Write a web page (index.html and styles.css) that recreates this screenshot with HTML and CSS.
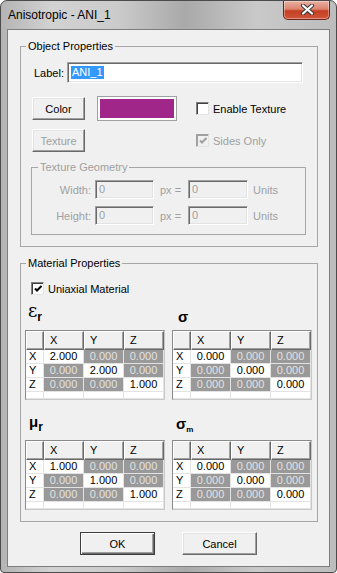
FILE: index.html
```html
<!DOCTYPE html>
<html lang="en">
<head>
    <meta charset="UTF-8">
    <title>Anisotropic - ANI_1</title>
    <link rel="stylesheet" href="styles.css">
</head>
<body>
<div class="window">
    <div class="titlebar">
        <span class="title">Anisotropic - ANI_1</span>
        <button class="close" type="button">
            <svg width="15" height="11" viewBox="0 0 15 11">
                <path d="M3 1.5 L12 9.5 M12 1.5 L3 9.5" stroke="#3b3b3b" stroke-width="4.2" stroke-linecap="round"/>
                <path d="M3 1.5 L12 9.5 M12 1.5 L3 9.5" stroke="#fff" stroke-width="2.2" stroke-linecap="round"/>
            </svg>
        </button>
    </div>
    <div class="client">
        <fieldset class="group obj">
            <legend>Object Properties</legend>
            <div class="label-row">
                <span class="lbl">Label:</span>
                <div class="textbox wide"><span class="sel">ANI_1</span></div>
            </div>
            <div class="obj-grid">
                <button class="btn" type="button">Color</button>
                <div class="swatch"><div class="fill"></div></div>
                <label class="checkline"><span class="check"></span>Enable Texture</label>
                <button class="btn" type="button" disabled>Texture</button>
                <div></div>
                <label class="checkline disabled">
                    <span class="check on">
                        <svg width="11" height="11" viewBox="0 0 11 11"><polyline points="2,4.5 4,6.5 8.5,2" fill="none" stroke="#a0a0a0" stroke-width="2"/></svg>
                    </span>Sides Only
                </label>
            </div>
            <fieldset class="group geom">
                <legend>Texture Geometry</legend>
                <div class="geom-grid">
                    <span class="glbl">Width:</span>
                    <div class="textbox off">0</div>
                    <span class="gpx">px =</span>
                    <div class="textbox off">0</div>
                    <span class="gunit">Units</span>
                    <span class="glbl">Height:</span>
                    <div class="textbox off">0</div>
                    <span class="gpx">px =</span>
                    <div class="textbox off">0</div>
                    <span class="gunit">Units</span>
                </div>
            </fieldset>
        </fieldset>

        <fieldset class="group mat">
            <legend>Material Properties</legend>
            <label class="checkline uni">
                <span class="check on">
                    <svg width="11" height="11" viewBox="0 0 11 11"><polyline points="2,4.5 4,6.5 8.5,2" fill="none" stroke="#000" stroke-width="2"/></svg>
                </span>Uniaxial Material
            </label>
            <div class="tensors">
                <div class="tensor">
                    <div class="sym eps"><span>ε<sub>r</sub></span></div>
                    <div class="matrix">
                        <div class="hd"></div><div class="hd">X</div><div class="hd">Y</div><div class="hd">Z</div>
                        <div class="rh">X</div><div class="v">2.000</div><div class="v off">0.000</div><div class="v off">0.000</div>
                        <div class="rh">Y</div><div class="v off">0.000</div><div class="v">2.000</div><div class="v off">0.000</div>
                        <div class="rh">Z</div><div class="v off">0.000</div><div class="v off">0.000</div><div class="v">1.000</div>
                        <div class="rh"></div><div class="v"></div><div class="v"></div><div class="v"></div>
                    </div>
                </div>
                <div class="tensor">
                    <div class="sym sig"><span>σ</span></div>
                    <div class="matrix">
                        <div class="hd"></div><div class="hd">X</div><div class="hd">Y</div><div class="hd">Z</div>
                        <div class="rh">X</div><div class="v">0.000</div><div class="v off">0.000</div><div class="v off">0.000</div>
                        <div class="rh">Y</div><div class="v off">0.000</div><div class="v">0.000</div><div class="v off">0.000</div>
                        <div class="rh">Z</div><div class="v off">0.000</div><div class="v off">0.000</div><div class="v">0.000</div>
                        <div class="rh"></div><div class="v"></div><div class="v"></div><div class="v"></div>
                    </div>
                </div>
                <div class="tensor">
                    <div class="sym mu"><span>μ<sub>r</sub></span></div>
                    <div class="matrix">
                        <div class="hd"></div><div class="hd">X</div><div class="hd">Y</div><div class="hd">Z</div>
                        <div class="rh">X</div><div class="v">1.000</div><div class="v off">0.000</div><div class="v off">0.000</div>
                        <div class="rh">Y</div><div class="v off">0.000</div><div class="v">1.000</div><div class="v off">0.000</div>
                        <div class="rh">Z</div><div class="v off">0.000</div><div class="v off">0.000</div><div class="v">1.000</div>
                        <div class="rh"></div><div class="v"></div><div class="v"></div><div class="v"></div>
                    </div>
                </div>
                <div class="tensor">
                    <div class="sym sigm"><span>σ<sub>m</sub></span></div>
                    <div class="matrix">
                        <div class="hd"></div><div class="hd">X</div><div class="hd">Y</div><div class="hd">Z</div>
                        <div class="rh">X</div><div class="v">0.000</div><div class="v off">0.000</div><div class="v off">0.000</div>
                        <div class="rh">Y</div><div class="v off">0.000</div><div class="v">0.000</div><div class="v off">0.000</div>
                        <div class="rh">Z</div><div class="v off">0.000</div><div class="v off">0.000</div><div class="v">0.000</div>
                        <div class="rh"></div><div class="v"></div><div class="v"></div><div class="v"></div>
                    </div>
                </div>
            </div>
        </fieldset>

        <div class="actions">
            <button class="btn big default" type="button">OK</button>
            <button class="btn big" type="button">Cancel</button>
        </div>
    </div>
</div>
</body>
</html>
```

FILE: styles.css
```css
* {
    box-sizing: border-box;
}
body {
    margin: 0;
    background: #fff;
    font: 11px "Liberation Sans", Arial, sans-serif;
    color: #000;
}

/* window frame */
.window {
    width: 337px;
    height: 573px;
    display: flex;
    flex-direction: column;
    border: 1px solid #4b4b4b;
    border-radius: 7px 7px 4px 4px;
    overflow: hidden;
    background: linear-gradient(90deg, #b4b4b4 0%, #d2d2d2 15%, #cbcbcb 35%, #a9a9a9 55%, #c9c9c9 76%, #bdbdbd 100%);
}
.titlebar {
    height: 28px;
    display: flex;
    align-items: flex-start;
    padding: 0 6px 0 7px;
}
.title {
    font-size: 12px;
    line-height: 28px;
}
.close {
    margin-left: auto;
    width: 47px;
    height: 19px;
    padding: 1px 0 0 2px;
    border: 1px solid #6b2719;
    border-top: none;
    border-radius: 0 0 5px 5px;
    background: linear-gradient(#eab0a2, #dc8470 45%, #c43e22 55%, #d1573b);
    box-shadow: inset 0 0 0 1px rgba(255, 255, 255, 0.35);
}

.client {
    flex: 1;
    margin: 0 6px 5px;
    border: 1px solid #7d7d7d;
    background: #f0f0f0;
    display: flex;
    flex-direction: column;
}

/* group boxes */
.group {
    margin: 0;
    padding: 0;
    min-width: 0;
    border: 1px solid #a6a6a6;
}
.group legend {
    margin-left: 5px;
    padding: 0 2px;
    line-height: 13px;
}
.obj {
    margin: 10px 11px 0 12px;
    padding-bottom: 11px;
}
.mat {
    margin: 10px 11px 0 12px;
    padding-bottom: 11px;
}

.label-row {
    display: flex;
    align-items: center;
    margin-top: 9px;
    padding-left: 13px;
}
.lbl {
    width: 33px;
}

/* sunken text boxes */
.textbox {
    height: 21px;
    padding: 3px 0 0 3px;
    line-height: 13px;
    background: #fff;
    border: 1px solid;
    border-color: #a0a0a0 #fff #fff #a0a0a0;
    box-shadow: inset 1px 1px 0 #696969, inset -1px -1px 0 #e3e3e3;
}
.textbox.wide {
    width: 236px;
}
.textbox.off {
    height: 19px;
    padding-top: 2px;
    background: #f0f0f0;
    color: #a0a0a0;
}
.sel {
    display: inline-block;
    padding: 0 1px;
    background: #3399ff;
    color: #fff;
}

/* buttons */
.btn {
    height: 23px;
    padding: 0;
    font: inherit;
    color: #000;
    background: #f0f0f0;
    border: 1px solid;
    border-color: #fff #696969 #696969 #fff;
    box-shadow: inset -1px -1px 0 #a0a0a0, inset 1px 1px 0 #e3e3e3;
}
.btn:disabled {
    color: #a0a0a0;
}
.btn.big {
    width: 75px;
}
.btn.default {
    border-color: #3c3c3c;
    box-shadow: inset 1px 1px 0 #fff, inset -1px -1px 0 #696969, inset -2px -2px 0 #a0a0a0;
}

.obj-grid {
    display: grid;
    grid-template-columns: 53px 80px 1fr;
    grid-template-rows: 25px 23px;
    column-gap: 12px;
    row-gap: 8px;
    align-items: center;
    margin-top: 13px;
    padding-left: 11px;
}
.swatch {
    height: 25px;
    padding: 2px;
    border: 1px solid #a0a0a0;
    background: #fff;
}
.swatch .fill {
    height: 100%;
    background: #a0268a;
}

/* check boxes */
.checkline {
    display: flex;
    align-items: center;
    gap: 4px;
}
.obj-grid .checkline {
    padding-left: 7px;
}
.checkline.disabled {
    color: #a0a0a0;
}
.check {
    width: 13px;
    height: 13px;
    flex: none;
    background: #fff;
    border: 1px solid;
    border-color: #808080 #e3e3e3 #e3e3e3 #808080;
    box-shadow: inset 1px 1px 0 #404040;
}
.check svg {
    display: block;
    margin: 1px 0 0 1px;
}
.checkline.disabled .check {
    background: #f0f0f0;
    border-color: #a0a0a0 #e3e3e3 #e3e3e3 #a0a0a0;
    box-shadow: inset 1px 1px 0 #a0a0a0;
}
.uni {
    margin: 12px 0 0 10px;
    height: 13px;
}

/* texture geometry */
.geom {
    margin: 9px 11px 0 10px;
    padding-bottom: 9px;
}
.geom legend {
    margin-left: 6px;
    color: #a0a0a0;
}
.geom-grid {
    display: grid;
    grid-template-columns: 63px 59px 34px 60px auto;
    grid-template-rows: 19px 19px;
    row-gap: 7px;
    align-items: center;
    margin-top: 6px;
    color: #a0a0a0;
}
.glbl {
    text-align: right;
    padding-right: 4px;
}
.gpx {
    padding-left: 6px;
}
.gunit {
    padding-left: 5px;
}

/* tensors */
.tensors {
    display: grid;
    grid-template-columns: 140px 140px;
    column-gap: 7px;
    row-gap: 5px;
    margin: 0 5px 0 4px;
}
.sym {
    height: 35px;
    display: flex;
    align-items: flex-end;
    padding-bottom: 6px;
    font-weight: bold;
    line-height: 1;
}
.sym sub {
    font: bold 12px "Liberation Sans", Arial, sans-serif;
    vertical-align: -4px;
}
.eps {
    padding-left: 3px;
    font: 18px "DejaVu Serif", serif;
}
.sig {
    padding-left: 6px;
    font-size: 15px;
}
.mu {
    padding-left: 4px;
    font-size: 15px;
}
.sigm {
    padding-left: 4px;
    font-size: 15px;
}
.sigm sub {
    font-size: 8px;
    vertical-align: -3px;
}

.matrix {
    display: grid;
    grid-template-columns: 18px 40px 40px 40px;
    grid-template-rows: 19px 14px 14px 14px 7px;
    height: 70px;
    background: #fff;
    border: 1px solid;
    border-color: #8a8a8a #c8c8c8 #c8c8c8 #8a8a8a;
    line-height: 12px;
}
.hd {
    padding: 2px 0 0 5px;
    background: #f0f0f0;
    border: 1px solid;
    border-color: #fff #696969 #696969 #fff;
    box-shadow: inset -1px -1px 0 #a0a0a0;
}
.rh {
    padding-left: 3px;
    border-right: 1px solid #e3e3e3;
    border-bottom: 1px solid #e3e3e3;
}
.v {
    text-align: center;
    border-right: 1px solid #e3e3e3;
    border-bottom: 1px solid #e3e3e3;
}
.v.off {
    background: #999;
    color: #e2e2e2;
}

.actions {
    display: flex;
    justify-content: center;
    gap: 27px;
    margin-top: 10px;
}
```
